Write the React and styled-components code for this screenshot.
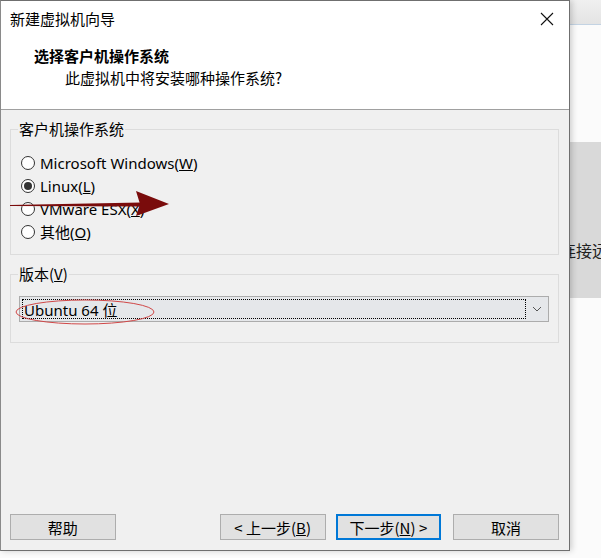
import React from 'react'
import styled, { createGlobalStyle } from 'styled-components'

const GlobalStyle = createGlobalStyle`
  html, body {
    margin: 0;
    padding: 0;
    background: #fbfbfb;
  }
  body {
    font-family: "Noto Sans", "Noto Sans CJK SC", sans-serif;
    font-size: 15px;
    color: #000;
  }
`

const Desktop = styled.div`
  position: relative;
  width: 601px;
  height: 558px;
  overflow: hidden;
  background: #fbfbfb;
`

const Backdrop = styled.div`
  display: flex;
  flex-direction: column;
  height: 100%;
  padding-left: 540px;
`

const TopBand = styled.div`
  height: 24px;
  background: linear-gradient(#f0f0f0, #e4e4e4);
  border-bottom: 1px solid #c3d3e3;
`

const Spacer = styled.div`
  height: ${p => p.$h}px;
`

const GrayPanel = styled.div`
  height: 156px;
  background: #d9d9d9;
  display: flex;
  flex-direction: column;
  justify-content: flex-end;
  padding-bottom: 36px;
  box-sizing: border-box;
  font-family: "Noto Sans CJK SC", sans-serif;
  font-size: 16px;
  white-space: nowrap;
  overflow: hidden;
  padding-left: 20px;
  color: #222;
`

const Dialog = styled.div`
  position: absolute;
  left: 0;
  top: 0;
  width: 570px;
  height: 551px;
  box-sizing: border-box;
  border: 1px solid #6f6f6f;
  border-left-color: #8a8a8a;
  display: flex;
  flex-direction: column;
  background: #f0f0f0;
  box-shadow: 2px 0 6px rgba(0, 0, 0, 0.18);
`

const TitleBar = styled.div`
  height: 35px;
  background: #fff;
  display: flex;
  align-items: center;
  justify-content: space-between;
  padding: 0 14px 0 9px;
  font-family: "Noto Sans CJK SC", sans-serif;
  font-size: 15px;
`

const CloseIcon = styled.svg`
  width: 16px;
  height: 16px;
`

const Header = styled.div`
  height: 74px;
  background: #fff;
  border-bottom: 1px solid #a0a0a0;
  box-sizing: border-box;
  padding: 9px 0 0 33px;
  font-family: "Noto Sans CJK SC", sans-serif;
`

const HeaderTitle = styled.div`
  font-weight: 700;
  font-size: 15px;
  line-height: 22px;
`

const HeaderSub = styled.div`
  font-size: 15px;
  line-height: 22px;
  padding-left: 31px;
`

const Body = styled.div`
  position: relative;
  flex: 1;
  display: flex;
  flex-direction: column;
  padding: 9px 10px 0 9px;
`

const Group = styled.fieldset`
  margin: 0 0 9px 0;
  padding: 0 ${p => p.$pr}px ${p => p.$pb}px ${p => p.$pl}px;
  border: 1px solid #dcdcdc;
  min-width: 0;
`

const Legend = styled.legend`
  margin-left: ${p => p.$ml}px;
  padding: 0 1px;
  line-height: 20px;
  font-family: "Noto Sans CJK SC", sans-serif;
  font-size: 15px;
`

const RadioList = styled.div`
  display: flex;
  flex-direction: column;
  padding-top: 12px;
`

const RadioRow = styled.label`
  display: flex;
  align-items: center;
  height: 23px;
  gap: 5px;
  font-size: 15px;
  white-space: nowrap;
`

const RadioCircle = styled.span`
  flex-shrink: 0;
  width: 14px;
  height: 14px;
  box-sizing: border-box;
  border: 1px solid #333;
  border-radius: 50%;
  background: #fff;
  display: flex;
  align-items: center;
  justify-content: center;
  &::after {
    content: '';
    width: 8px;
    height: 8px;
    border-radius: 50%;
    background: ${p => (p.$checked ? '#333' : 'transparent')};
  }
`

const Combo = styled.div`
  margin-top: 12px;
  height: 26px;
  box-sizing: border-box;
  border: 1px solid #acacac;
  background: #e5e7ea;
  display: flex;
  align-items: center;
  padding: 0 0 0 2px;
`

const ComboValue = styled.div`
  flex: 1;
  height: 20px;
  box-sizing: border-box;
  border: 1px dotted #000;
  display: flex;
  align-items: center;
  padding-left: 1px;
  font-size: 15px;
  font-family: "Noto Sans", "Noto Sans CJK SC", sans-serif;
`

const ComboArrow = styled.div`
  width: 22px;
  display: flex;
  justify-content: center;
  align-items: center;
`

const Fill = styled.div`
  flex: 1;
`

const Footer = styled.div`
  display: flex;
  align-items: center;
  padding: 0 0 10px 0;
  gap: 10px;
`

const Button = styled.button`
  width: 106px;
  height: 26px;
  margin-left: ${p => p.$ml || 0}px;
  box-sizing: border-box;
  border: ${p => (p.$default ? '2px solid #0078d7' : '1px solid #adadad')};
  background: #e1e1e1;
  font-family: "Noto Sans CJK SC", sans-serif;
  font-size: 15px;
  color: #000;
  padding: 0;
  display: flex;
  align-items: center;
  justify-content: center;
`

const Overlay = styled.svg`
  position: absolute;
  left: 0;
  top: 0;
  pointer-events: none;
  overflow: visible;
`

const options = [
  { label: 'Microsoft Windows', key: 'W' },
  { label: 'Linux', key: 'L', checked: true },
  { label: 'VMware ESX', key: 'X' },
  { label: '其他', key: 'O' },
]

export default function App() {
  return (
    <Desktop>
      <GlobalStyle />
      <Backdrop>
        <TopBand />
        <Spacer $h={117} />
        <GrayPanel>连接远程</GrayPanel>
      </Backdrop>

      <Dialog>
        <TitleBar>
          <span>新建虚拟机向导</span>
          <CloseIcon viewBox="0 0 16 16">
            <path d="M2 2 L14 14 M14 2 L2 14" stroke="#111" strokeWidth="1.1" fill="none" />
          </CloseIcon>
        </TitleBar>
        <Header>
          <HeaderTitle>选择客户机操作系统</HeaderTitle>
          <HeaderSub>此虚拟机中将安装哪种操作系统?</HeaderSub>
        </Header>

        <Body>
          <Group $pl={10} $pr={9} $pb={11}>
            <Legend $ml={-3}>客户机操作系统</Legend>
            <RadioList>
              {options.map(o => (
                <RadioRow key={o.key}>
                  <RadioCircle $checked={o.checked} />
                  <span>
                    {o.label}(<u>{o.key}</u>)
                  </span>
                </RadioRow>
              ))}
            </RadioList>
          </Group>

          <Group $pl={8} $pr={9} $pb={20}>
            <Legend $ml={-1}>
              版本(<u>V</u>)
            </Legend>
            <Combo>
              <ComboValue>Ubuntu 64 位</ComboValue>
              <ComboArrow>
                <svg width="10" height="6" viewBox="0 0 10 6">
                  <path d="M1 1 L5 5 L9 1" stroke="#555" strokeWidth="1" fill="none" />
                </svg>
              </ComboArrow>
            </Combo>
          </Group>

          <Fill />

          <Footer>
            <Button>帮助</Button>
            <Button $ml={94}>
              &lt; 上一步(<u>B</u>)
            </Button>
            <Button $default>
              下一步(<u>N</u>) &gt;
            </Button>
            <Button $ml={2}>取消</Button>
          </Footer>
        </Body>

        <Overlay width="570" height="551">
          <path d="M9 204 L140 201.5 L140 205.5 L9 205 Z" fill="#7a0c0c" />
          <path d="M135 190 L168 203 L135 215 L139 203 Z" fill="#7a0c0c" />
          <ellipse cx="84" cy="311" rx="69" ry="12" fill="none" stroke="#d04848" strokeWidth="1" />
        </Overlay>
      </Dialog>
    </Desktop>
  )
}
